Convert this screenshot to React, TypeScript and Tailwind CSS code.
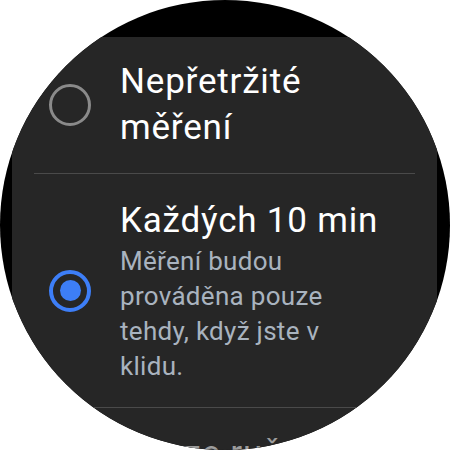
export default function App() {
  return (
    <div className="w-[450px] h-[450px] bg-white">
      <div className="w-[450px] h-[450px] rounded-full overflow-hidden bg-black pt-[37px] pl-[12px] pr-[13px]">
        <div className="h-full bg-[#262626] font-['Roboto',sans-serif]">
          <div className="flex items-center h-[137px] border-b border-[#4a4a4a] mx-[22px]">
            <div className="w-[72px] shrink-0 flex justify-center">
              <div className="w-[42px] h-[42px] rounded-full border-[3px] border-[#8a8a8a]" />
            </div>
            <div className="pl-[14px] text-[35px] leading-[46px] tracking-[0.8px] text-white">
              Nepřetržité
              <br />
              měření
            </div>
          </div>
          <div className="flex items-center h-[234px] border-b border-[#4a4a4a] mx-[22px]">
            <div className="w-[72px] shrink-0 flex justify-center">
              <div className="w-[42px] h-[42px] rounded-full border-[4px] border-[#3d7ef7] flex items-center justify-center">
                <div className="w-[21px] h-[21px] rounded-full bg-[#3d7ef7]" />
              </div>
            </div>
            <div className="pl-[14px]">
              <div className="text-[35px] leading-[46px] tracking-[0.8px] text-white whitespace-nowrap">Každých 10 min</div>
              <div className="text-[26px] leading-[35px] tracking-[0.3px] text-[#a9b3bf]">
                Měření budou
                <br />
                prováděna pouze
                <br />
                tehdy, když jste v
                <br />
                klidu.
              </div>
            </div>
          </div>
          <div className="flex mx-[22px] pt-[23px]">
            <div className="w-[72px] shrink-0" />
            <div className="pl-[14px] text-[35px] leading-[46px] tracking-[0.8px] text-[#9c9c9c] whitespace-nowrap">Pouze ručně</div>
          </div>
        </div>
      </div>
    </div>
  );
}
